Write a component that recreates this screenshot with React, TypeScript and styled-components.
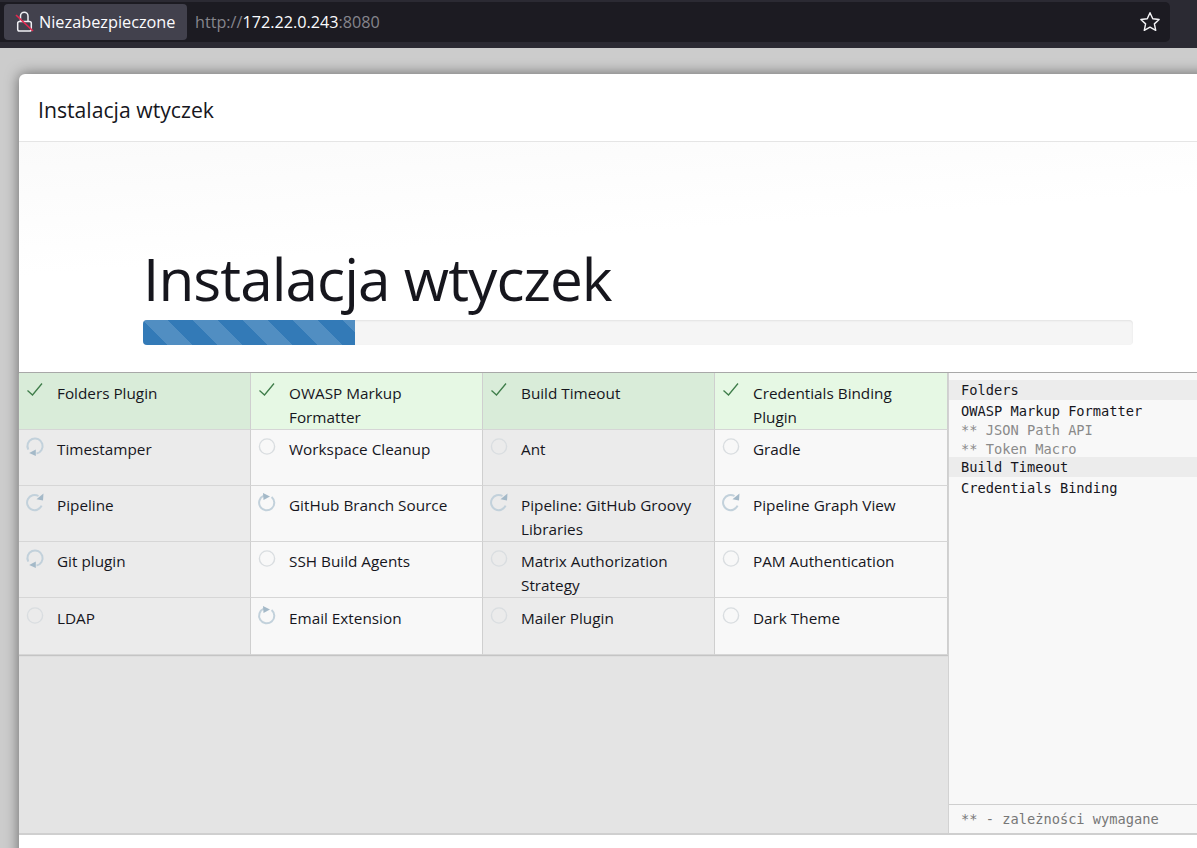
import React from "react";
import styled, { createGlobalStyle } from "styled-components";

const Global = createGlobalStyle`
  html, body { margin: 0; padding: 0; height: 848px; overflow: hidden; background: #cccccc; }
  #root { height: 848px; overflow: hidden; }
`;
const UI = `"Open Sans", "Noto Sans", sans-serif`;
const MONO = `"DejaVu Sans Mono", "Liberation Mono", monospace`;

const Page = styled.div`
  width: 1197px; height: 848px; overflow: hidden; display: flex; flex-direction: column;
  background: #cccccc;
`;
const BrowserBar = styled.header`
  height: 48px; flex: none; box-sizing: border-box; background: #2b2a33; padding: 2px 27px 6px 0;
`;
const UrlField = styled.div`
  height: 40px; background: #1c1b22; border-radius: 0 5px 5px 0; display: flex; align-items: center;
  padding: 0 9px 0 4px; font-family: ${UI};
`;
const Security = styled.div`
  width: 183px; height: 36px; box-sizing: border-box; border-radius: 4px; background: #42414d; color: #fbfbfe;
  display: flex; align-items: center; gap: 4px; padding-left: 11px; font-size: 16.3px; line-height: 38px;
`;
const Address = styled.div`
  margin-left: 8px; flex: 1; font-size: 16.2px; line-height: 43px; color: #85858c;
  b { font-weight: 400; color: #fbfbfe; }
`;
const Dialog = styled.main`
  margin: 26px 0 0 19px; width: 1260px; height: 800px; flex: none; background: #fff; border-radius: 6px 6px 0 0;
  box-shadow: 0 0 14px rgba(0,0,0,.5); display: flex; flex-direction: column;
`;
const DialogHead = styled.div`
  height: 68px; flex: none; box-sizing: border-box; padding: 3px 0 0 19px; display: flex; align-items: center;
  border-bottom: 1px solid #e5e5e5; font: 400 21.2px ${UI}; color: #16161d;
`;
const Hero = styled.section`
  height: 231px; flex: none; box-sizing: border-box; padding: 95px 0 0 124px;
  background: linear-gradient(176deg, #fafafa 0, #ffffff 42%);
  box-shadow: inset 0 -1px 0 #a8a8a8;
`;
const Title = styled.h1`
  margin: 0; font: 400 58.5px/82px ${UI}; color: #16161d; letter-spacing: -0.95px; height: 83px;
`;
const Track = styled.div`
  width: 990px; height: 25px; background: #f5f5f5; border-radius: 4px; overflow: hidden;
  box-shadow: inset 0 1px 2px rgba(0,0,0,.08);
`;
const Fill = styled.div`
  height: 100%; background-color: #337ab7;
  background-image: linear-gradient(45deg, rgba(255,255,255,.15) 25%, transparent 25%, transparent 50%, rgba(255,255,255,.15) 50%, rgba(255,255,255,.15) 75%, transparent 75%, transparent);
  background-size: 50px 50px;
`;
const Body = styled.section`
  height: 460px; flex: none; display: flex; box-shadow: 0 2px 0 #cfcfcf; 
`;
const PluginArea = styled.div`
  width: 929px; flex: none; background: #e4e4e4;
`;
const Grid = styled.div`
  display: grid; grid-template-columns: 232px 232px 232px 233px; grid-template-rows: 57px 56px 56px 56px 57px;
  box-shadow: 0 1px 1px #c4c4c4;
`;
const Cell = styled.div<{ $bg: string; $pad: number }>`
  box-sizing: border-box; background: ${p => p.$bg}; position: relative; padding: ${p => p.$pad}px 16px 0 38px;
  border-right: 1px solid #cfcfcf; border-bottom: 1px solid #d6d6d6;
  font: 400 15.3px/24.5px ${UI}; color: #16161d;
`;
const StateIcon = styled.svg<{ $top: number }>`
  position: absolute; left: 6px; top: ${p => p.$top}px; width: 20px; height: 20px;
`;
const Side = styled.aside`
  flex: 1; background: #f8f8f8; display: flex; flex-direction: column; border-left: 1px solid #d2d2d2;
  font: 13.7px/19px ${MONO}; 
`;
const LogList = styled.div`
  flex: 1; padding-top: 7px;
`;
const LogRow = styled.div<{ $shade?: boolean; $dep?: boolean }>`
  padding-left: 12px; background: ${p => p.$shade ? "#ececec" : "transparent"}; color: ${p => p.$dep ? "#8a8a8a" : "#16161d"};
  height: ${p => p.$dep ? 18.5 : 20}px; line-height: ${p => p.$shade ? 20 : p.$dep ? 20.5 : 22}px; white-space: nowrap;
`;
const Legend = styled.div`
  height: 29px; flex: none; box-sizing: border-box; border-top: 1px solid #cfcfcf; padding: 5px 0 0 12px; color: #777;
  white-space: nowrap; line-height: 19px;
`;

type S = "done" | "idle" | "cw" | "up" | "ccw";

function Icon({ s, top }: { s: S; top: number }) {
  if (s === "done") return (
    <StateIcon $top={top} viewBox="0 0 20 20" fill="none" stroke="#3f7d4a" strokeWidth="1.3">
      <path d="M2.5 10.5 L7.5 15 L17 3.5" />
    </StateIcon>
  );
  if (s === "idle") return (
    <StateIcon $top={top} viewBox="0 0 20 20" fill="none" stroke="#d9dde0" strokeWidth="1.4">
      <circle cx="10" cy="10.5" r="7.6" />
    </StateIcon>
  );
  if (s === "ccw") return (
    <StateIcon $top={top} viewBox="0 0 20 20" fill="none" stroke="#c2d1db" strokeWidth="2">
      <path d="M11.5 17.5 A7.6 7.6 0 1 0 3.3 13.6" />
      <path d="M10.8 13.6 L10.8 20 L4.2 17 Z" fill="#a4b9c8" stroke="none" />
    </StateIcon>
  );
  if (s === "up") return (
    <StateIcon $top={top} viewBox="0 0 20 20" fill="none" stroke="#c2d1db" strokeWidth="2">
      <path d="M6.8 3.7 A7.6 7.6 0 1 0 14.6 4.9" />
      <path d="M6 1 L13 4.4 L6.5 8 Z" fill="#a4b9c8" stroke="none" />
    </StateIcon>
  );
  return (
    <StateIcon $top={top} viewBox="0 0 20 20" fill="none" stroke="#c2d1db" strokeWidth="2">
      <path d="M16.6 13.7 A7.6 7.6 0 1 1 13.5 4" />
      <path d="M18.5 1.5 L18 8.5 L11.5 7.2 Z" fill="#a4b9c8" stroke="none" />
    </StateIcon>
  );
}

const cells: { t: string; s: S; bg: string; top: number }[] = [
  { t: "Folders Plugin", s: "done", bg: "#d9ecd9", top: 7 },
  { t: "OWASP Markup Formatter", s: "done", bg: "#e6f8e4", top: 7 },
  { t: "Build Timeout", s: "done", bg: "#d9ecd9", top: 7 },
  { t: "Credentials Binding Plugin", s: "done", bg: "#e6f8e4", top: 7 },
  { t: "Timestamper", s: "ccw", bg: "#ebebeb", top: 6 },
  { t: "Workspace Cleanup", s: "idle", bg: "#f8f8f8", top: 6 },
  { t: "Ant", s: "idle", bg: "#ebebeb", top: 6 },
  { t: "Gradle", s: "idle", bg: "#f8f8f8", top: 6 },
  { t: "Pipeline", s: "cw", bg: "#ebebeb", top: 6 },
  { t: "GitHub Branch Source", s: "up", bg: "#f8f8f8", top: 6 },
  { t: "Pipeline: GitHub Groovy Libraries", s: "cw", bg: "#ebebeb", top: 6 },
  { t: "Pipeline Graph View", s: "cw", bg: "#f8f8f8", top: 6 },
  { t: "Git plugin", s: "ccw", bg: "#ebebeb", top: 6 },
  { t: "SSH Build Agents", s: "idle", bg: "#f8f8f8", top: 6 },
  { t: "Matrix Authorization Strategy", s: "idle", bg: "#ebebeb", top: 6 },
  { t: "PAM Authentication", s: "idle", bg: "#f8f8f8", top: 6 },
  { t: "LDAP", s: "idle", bg: "#ebebeb", top: 7 },
  { t: "Email Extension", s: "up", bg: "#f8f8f8", top: 7 },
  { t: "Mailer Plugin", s: "idle", bg: "#ebebeb", top: 7 },
  { t: "Dark Theme", s: "idle", bg: "#f8f8f8", top: 7 },
];

const log: { t: string; shade?: boolean; dep?: boolean }[] = [
  { t: "Folders", shade: true },
  { t: "OWASP Markup Formatter" },
  { t: "** JSON Path API", dep: true },
  { t: "** Token Macro", dep: true },
  { t: "Build Timeout", shade: true },
  { t: "Credentials Binding" },
];

export default function App() {
  return (
    <Page>
      <Global />
      <BrowserBar>
        <UrlField>
          <Security>
            <svg width="20" height="22" viewBox="0 0 20 22" fill="none">
              <path d="M5.5 10.5 V5 a3.7 3.7 0 0 1 7.5 0 V10.5" stroke="#f0f0f4" strokeWidth="1.5" />
              <rect x="2.7" y="10.5" width="13.6" height="9.5" rx="1.8" stroke="#f0f0f4" strokeWidth="1.5" />
              <path d="M1 4 L18 20" stroke="#e22850" strokeWidth="1.7" />
            </svg>
            <span>Niezabezpieczone</span>
          </Security>
          <Address>http://<b>172.22.0.243</b>:8080</Address>
          <svg width="22" height="22" viewBox="0 0 20 20" fill="none" stroke="#f4f4f7" strokeWidth="1.3" strokeLinejoin="round">
            <path d="M10 1.6 L12.5 7 L18.3 7.7 L14 11.7 L15.2 17.6 L10 14.7 L4.8 17.6 L6 11.7 L1.7 7.7 L7.5 7 Z" />
          </svg>
        </UrlField>
      </BrowserBar>
      <Dialog>
        <DialogHead>Instalacja wtyczek</DialogHead>
        <Hero>
          <Title>Instalacja wtyczek</Title>
          <Track><Fill style={{ width: `${(212 / 990) * 100}%` }} /></Track>
        </Hero>
        <Body>
          <PluginArea>
            <Grid>
              {cells.map(c => (
                <Cell key={c.t} $bg={c.bg} $pad={c.top === 6 ? 6.8 : 7.5}>
                  <Icon s={c.s} top={c.top} />
                  {c.t}
                </Cell>
              ))}
            </Grid>
          </PluginArea>
          <Side>
            <LogList>
              {log.map(l => <LogRow key={l.t} $shade={l.shade} $dep={l.dep}>{l.t}</LogRow>)}
            </LogList>
            <Legend>** - zależności wymagane</Legend>
          </Side>
        </Body>
      </Dialog>
    </Page>
  );
}
